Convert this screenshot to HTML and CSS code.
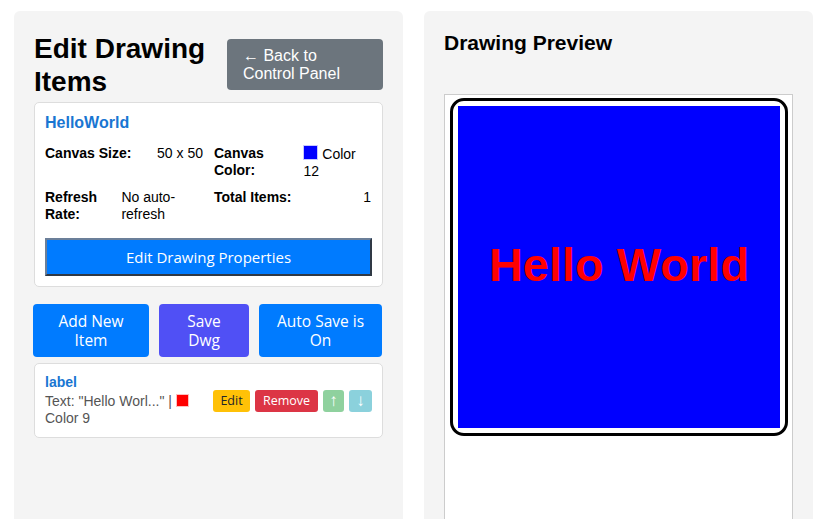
FILE: index.html
```html
<!DOCTYPE html>
<html lang="en">
<head>
<meta charset="utf-8">
<title>Edit Drawing Items</title>
<link rel="stylesheet" href="styles.css">
</head>
<body>
<div class="layout">
  <section class="panel">
    <div class="header">
      <h1 class="title">Edit Drawing Items</h1>
      <button class="btn-back">← Back to Control Panel</button>
    </div>
    <div class="card info-card">
      <h3 class="dwg-name">HelloWorld</h3>
      <div class="info-grid">
        <div class="info-cell"><span class="info-label">Canvas Size:</span><span class="info-value">50 x 50</span></div>
        <div class="info-cell"><span class="info-label">Canvas Color:</span><span class="info-value"><span class="swatch swatch-blue"></span> Color 12</span></div>
        <div class="info-cell"><span class="info-label">Refresh Rate:</span><span class="info-value">No auto-refresh</span></div>
        <div class="info-cell"><span class="info-label">Total Items:</span><span class="info-value">1</span></div>
      </div>
      <button class="btn-props">Edit Drawing Properties</button>
    </div>
    <div class="actions">
      <button class="btn-action btn-add">Add New Item</button>
      <button class="btn-action btn-save">Save Dwg</button>
      <button class="btn-action btn-auto">Auto Save is On</button>
    </div>
    <div class="card item-card">
      <div class="item-info">
        <div class="item-name">label</div>
        <div class="item-desc">Text: "Hello Worl..." | <span class="swatch swatch-red"></span> Color 9</div>
      </div>
      <div class="item-buttons">
        <button class="btn-sm btn-edit">Edit</button>
        <button class="btn-sm btn-remove">Remove</button>
        <button class="btn-sm btn-up">↑</button>
        <button class="btn-sm btn-down">↓</button>
      </div>
    </div>
  </section>
  <section class="panel">
    <h2 class="preview-title">Drawing Preview</h2>
    <div class="preview-frame">
      <div class="drawing-outline">
        <div class="drawing-canvas">Hello World</div>
      </div>
    </div>
  </section>
</div>
</body>
</html>
```
FILE: styles.css
```css
html, body {
  margin: 0;
  padding: 0;
  background: #ffffff;
  overflow: hidden;
}
body {
  font-family: "Liberation Sans", Arial, sans-serif;
  color: #000;
}
.layout {
  display: flex;
  gap: 21px;
  padding: 11px 12px 0 14px;
}
.panel {
  width: 389px;
  box-sizing: border-box;
  background: #f4f4f4;
  border-radius: 6px;
  padding: 20px;
  min-height: 540px;
}
.header {
  display: flex;
  align-items: center;
  justify-content: space-between;
  gap: 10px;
  margin-bottom: 4px;
}
.title {
  margin: 0;
  font-size: 28px;
  line-height: 33px;
  padding-top: 1px;
  font-weight: bold;
}
.btn-back {
  flex: 0 0 156px;
  width: 156px;
  height: 51px;
  background: #6c757d;
  color: #fff;
  border: none;
  border-radius: 4px;
  padding: 0 16px;
  text-align: left;
  font-family: "Liberation Sans", Arial, sans-serif;
  font-size: 16px;
  line-height: 18px;
}
.card {
  background: #fff;
  border: 1px solid #dddddd;
  border-radius: 5px;
  padding: 10px;
}
.dwg-name {
  margin: 0 0 13px;
  font-size: 16px;
  line-height: 19px;
  color: #1976d2;
}
.info-grid {
  display: grid;
  grid-template-columns: 158px 157px;
  column-gap: 11px;
  row-gap: 9px;
  margin-bottom: 15px;
}
.info-cell {
  display: flex;
  justify-content: space-between;
  font-size: 14px;
  line-height: 17px;
}
.info-label {
  font-weight: bold;
}
.swatch {
  display: inline-block;
  vertical-align: -1px;
  box-sizing: border-box;
}
.swatch-blue {
  width: 15px;
  height: 15px;
  background: #0000ff;
  border: 1px solid #c8c8ff;
}
.swatch-red {
  width: 13px;
  height: 13px;
  background: #ff0000;
  border: 1px solid #ffc0c0;
}
.btn-props {
  display: block;
  width: 100%;
  height: 38px;
  background: #007bff;
  color: #fff;
  border: 2px outset #6b7f99;
  font-family: "Open Sans", "Noto Sans", sans-serif;
  font-size: 15px;
}
.actions {
  display: flex;
  gap: 10px;
  margin: 17px 0 6px;
}
.btn-action {
  height: 53px;
  border: none;
  border-radius: 4px;
  color: #fff;
  font-family: "Open Sans", "Noto Sans", sans-serif;
  font-size: 15.5px;
  line-height: 19px;
  padding: 0 14px;
}
.btn-add { width: 116px; background: #007bff; margin-left: -1px; }
.btn-save { width: 90px; background: #5050f5; }
.btn-auto { width: 123px; background: #007bff; }
.item-card {
  display: flex;
  align-items: center;
  justify-content: space-between;
}
.item-name {
  font-weight: bold;
  font-size: 14px;
  line-height: 17px;
  margin-bottom: 2px;
  color: #1976d2;
}
.item-desc {
  font-size: 14px;
  line-height: 17px;
  color: #555;
  width: 160px;
}
.item-buttons {
  display: flex;
  gap: 5px;
}
.btn-sm {
  height: 22px;
  border: none;
  border-radius: 3px;
  font-family: "Open Sans", "Noto Sans", sans-serif;
  font-size: 12.5px;
  padding: 0 7px;
  color: #fff;
}
.btn-edit { background: #ffc107; color: #212529; width: 37px; padding: 0; }
.btn-remove { background: #dc3545; width: 63px; padding: 0; }
.btn-up, .btn-down {
  padding: 0;
  font-family: "Liberation Sans", Arial, sans-serif;
  font-size: 17px;
  line-height: 22px;
}
.btn-up { background: #8fd19e; width: 21px; }
.btn-down { background: #8bd1dc; width: 23px; }
.preview-title {
  margin: 0 0 39px;
  font-size: 21px;
  line-height: 24px;
  font-weight: bold;
}
.preview-frame {
  background: #fff;
  border: 1px solid #cccccc;
  padding: 3px 5px;
  height: 440px;
}
.drawing-outline {
  width: 338px;
  height: 338px;
  box-sizing: border-box;
  border: 3px solid #000;
  border-radius: 14px;
  padding: 5px;
  background: #fff;
}
.drawing-canvas {
  box-sizing: border-box;
  width: 100%;
  height: 100%;
  padding-bottom: 6px;
  background: #0000ff;
  color: #ff0000;
  font-weight: bold;
  font-size: 47px;
  display: flex;
  align-items: center;
  justify-content: center;
}
```
